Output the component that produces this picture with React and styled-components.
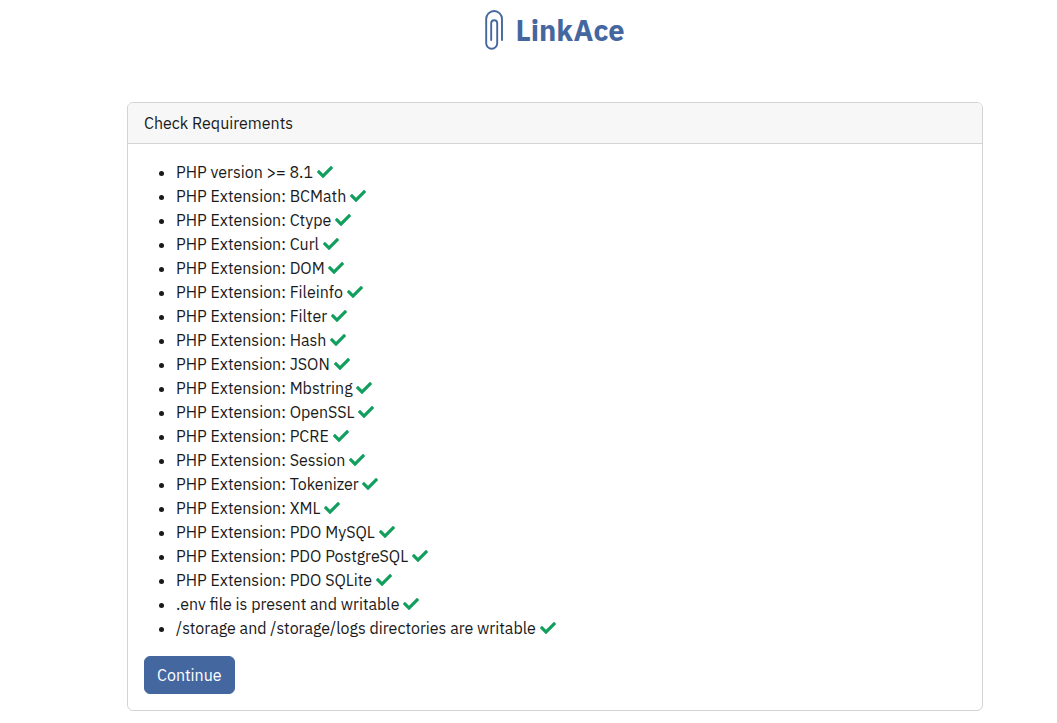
import React from "react";
import styled, {createGlobalStyle} from "styled-components";
import {FaCheck} from "react-icons/fa";

const theme = {
    primary: '#44679f',
    success: '#129f5d',
    text: '#1a1a1a',
    border: '#d3d3d3',
    cap: '#f7f7f7',
};

const requirements = [
    'PHP version >= 8.1',
    'PHP Extension: BCMath',
    'PHP Extension: Ctype',
    'PHP Extension: Curl',
    'PHP Extension: DOM',
    'PHP Extension: Fileinfo',
    'PHP Extension: Filter',
    'PHP Extension: Hash',
    'PHP Extension: JSON',
    'PHP Extension: Mbstring',
    'PHP Extension: OpenSSL',
    'PHP Extension: PCRE',
    'PHP Extension: Session',
    'PHP Extension: Tokenizer',
    'PHP Extension: XML',
    'PHP Extension: PDO MySQL',
    'PHP Extension: PDO PostgreSQL',
    'PHP Extension: PDO SQLite',
    '.env file is present and writable',
    '/storage and /storage/logs directories are writable',
];

const GlobalStyle = createGlobalStyle`
    *, *::before, *::after {
        box-sizing: border-box;
    }

    body {
        margin: 0;
        color: ${theme.text};
        background: #fff;
        font-family: "IBM Plex Sans", Roboto, "Liberation Sans", sans-serif;
        font-size: 16px;
        line-height: 24px;
    }
`;

const Page = styled.main`
    padding: 8px 74px 12px 127px;
`;

const Brand = styled.header`
    display: flex;
    align-items: center;
    justify-content: center;
    gap: 12px;
    margin-bottom: 50px;
    color: ${theme.primary};
`;

const BrandName = styled.h1`
    margin: 0;
    font-size: 29px;
    font-weight: 700;
    line-height: 44px;
`;

const Card = styled.section`
    border: 1px solid ${theme.border};
    border-radius: 6px;
    overflow: hidden;
`;

const CardHeader = styled.h2`
    margin: 0;
    padding: 8px 16px;
    border-bottom: 1px solid ${theme.border};
    background: ${theme.cap};
    font-size: 16px;
    font-weight: 400;
`;

const CardBody = styled.div`
    padding: 16px;
`;

const List = styled.ul`
    margin: 0 0 16px;
    padding-left: 32px;
`;

const Check = styled(FaCheck)`
    color: ${theme.success};
    vertical-align: -2px;
`;

const Button = styled.button`
    display: block;
    padding: 6px 12px;
    border: 1px solid ${theme.primary};
    border-radius: 6px;
    color: #fff;
    background: ${theme.primary};
    font: inherit;
    cursor: pointer;
`;

function Paperclip() {
    return (
        <svg width="18" height="40" viewBox="0 0 18 40" fill="none" stroke="currentColor" strokeWidth="1.9" strokeLinecap="round" aria-hidden="true">
            <path d="M17 30V8.9a7.9 7.9 0 0 0-15.8 0V33.2a5.5 5.5 0 0 0 11 0V13.2a3 3 0 0 0-6 0V30" />
        </svg>
    );
}

function App() {
    return (
        <>
            <GlobalStyle />
            <Page>
                <Brand>
                    <Paperclip />
                    <BrandName>LinkAce</BrandName>
                </Brand>
                <Card>
                    <CardHeader>Check Requirements</CardHeader>
                    <CardBody>
                        <List>
                            {requirements.map((item) => (
                                <li key={item}>{item} <Check role="img" aria-label="passed" /></li>
                            ))}
                        </List>
                        <Button type="button">Continue</Button>
                    </CardBody>
                </Card>
            </Page>
        </>
    );
}

export default App;
